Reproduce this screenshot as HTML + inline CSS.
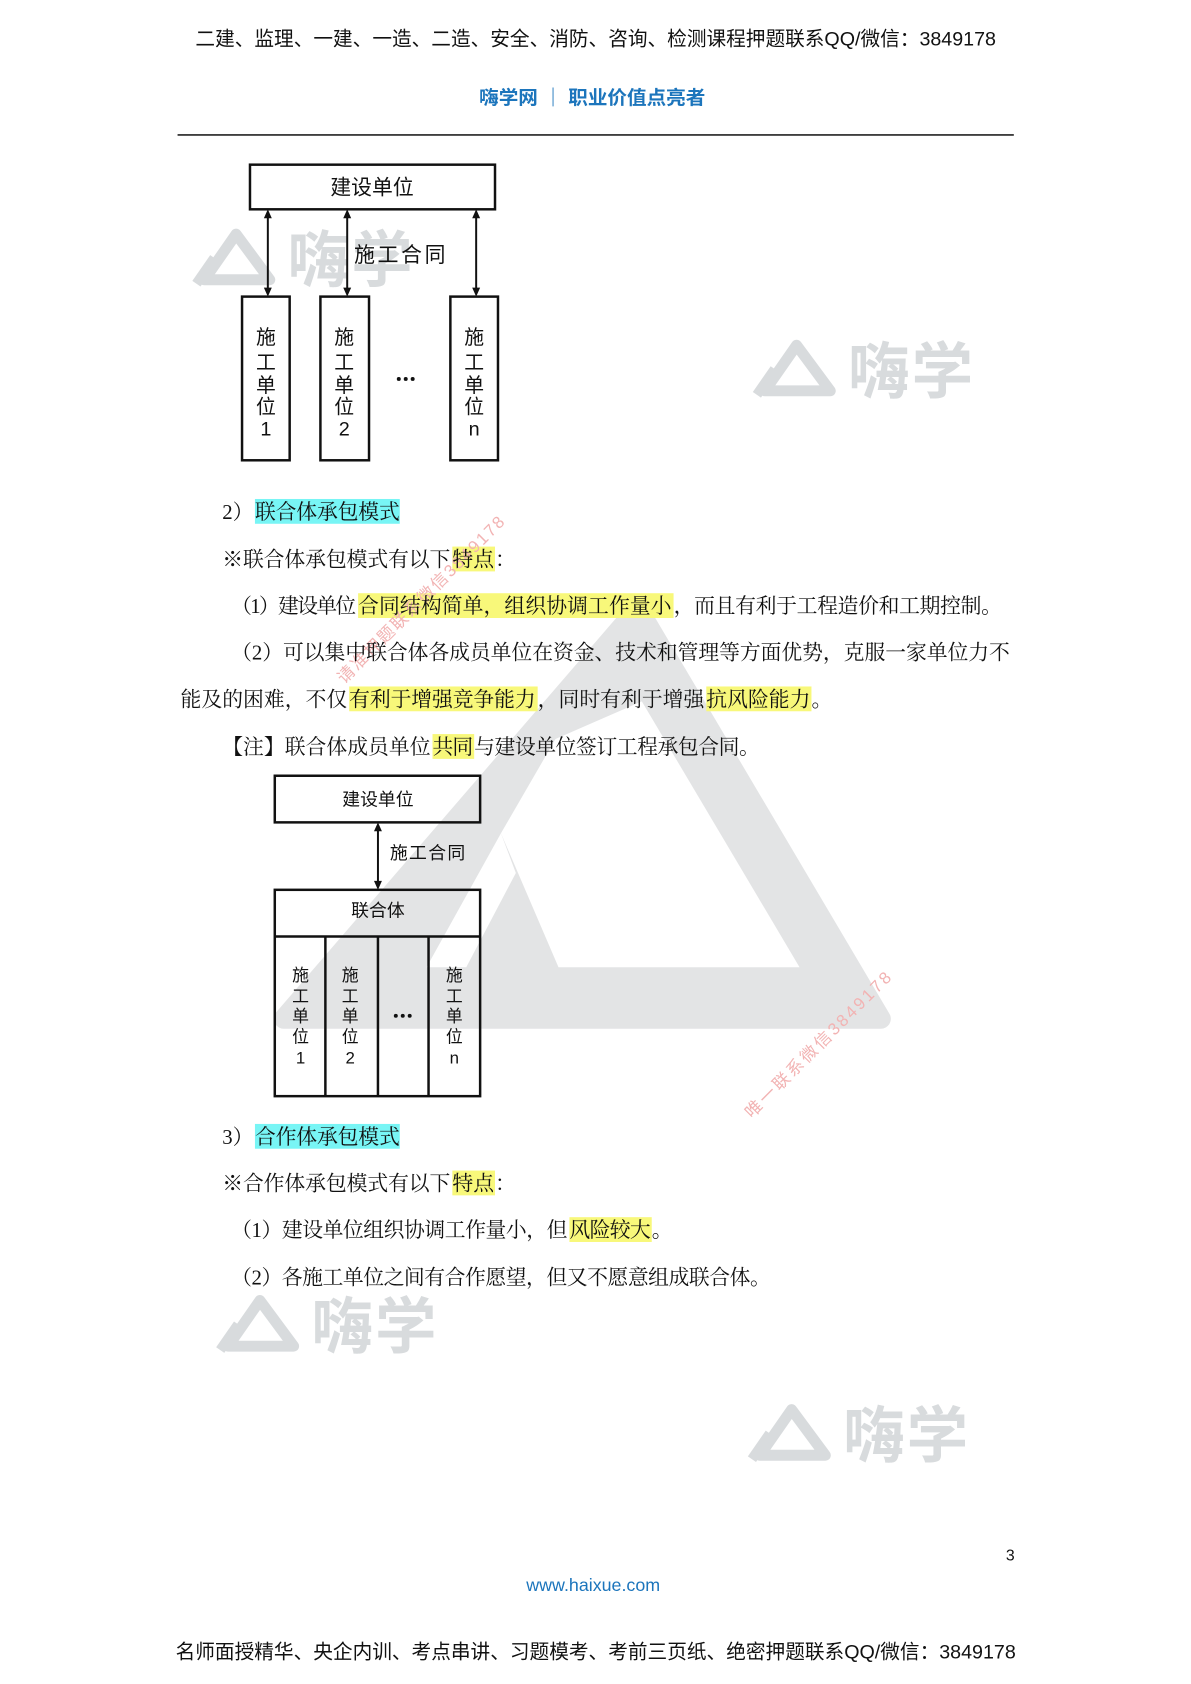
<!DOCTYPE html>
<html><head><meta charset="utf-8"><style>
html,body{margin:0;padding:0;background:#fff;}
svg{display:block;}
.s{font-family:"Liberation Sans","Noto Sans CJK SC",sans-serif;}
.t{font-family:"Liberation Serif","Noto Serif CJK SC",serif;font-size:21px;fill:#111;}
.d{font-family:"Liberation Sans","Noto Sans CJK SC",sans-serif;fill:#111;}
.wm{font-family:"Liberation Sans","Noto Sans CJK SC",sans-serif;font-weight:bold;fill:#d8dbdd;font-size:62px;}
.pk{font-family:"Liberation Sans","Noto Sans CJK SC",sans-serif;fill:#f2b3b3;font-size:17px;}
</style></head><body>
<svg width="1191" height="1684" viewBox="0 0 1191 1684" xmlns="http://www.w3.org/2000/svg">
<g transform="scale(0.992)">
<!-- big triangle watermark -->
<path d="M643 613 L888 1027 L286 1027 Z" fill="#e3e4e5" stroke="#e3e4e5" stroke-width="20" stroke-linejoin="round"/>
<path d="M647 707 L806 975 L563 975 L505 840 L560 745 Z" fill="#fff"/>
<path d="M505 840 L430 975 L470 975 L520 880 Z" fill="#fff"/>

<!-- small logo watermarks -->
<g transform="translate(198,230)"><path d="M8 52 L40 6 L74 52 Z" fill="none" stroke="#d8dbdd" stroke-width="11" stroke-linejoin="round"/><path d="M0 56 L18 30" stroke="#d8dbdd" stroke-width="10"/></g>
<text class="wm" x="290" y="284" textLength="126">嗨学</text>
<g transform="translate(763,342)"><path d="M8 52 L40 6 L74 52 Z" fill="none" stroke="#d8dbdd" stroke-width="11" stroke-linejoin="round"/><path d="M0 56 L18 30" stroke="#d8dbdd" stroke-width="10"/></g>
<text class="wm" x="855" y="396" textLength="126">嗨学</text>
<g transform="translate(222,1305)"><path d="M8 52 L40 6 L74 52 Z" fill="none" stroke="#d8dbdd" stroke-width="11" stroke-linejoin="round"/><path d="M0 56 L18 30" stroke="#d8dbdd" stroke-width="10"/></g>
<text class="wm" x="314" y="1359" textLength="126">嗨学</text>
<g transform="translate(758,1415)"><path d="M8 52 L40 6 L74 52 Z" fill="none" stroke="#d8dbdd" stroke-width="11" stroke-linejoin="round"/><path d="M0 56 L18 30" stroke="#d8dbdd" stroke-width="10"/></g>
<text class="wm" x="850" y="1469" textLength="126">嗨学</text>

<!-- header -->
<text class="s" x="197" y="46" font-size="20" fill="#111" textLength="807" lengthAdjust="spacingAndGlyphs">二建、监理、一建、一造、二造、安全、消防、咨询、检测课程押题联系QQ/微信：3849178</text>
<text class="s" x="483" y="105" font-size="19" font-weight="bold" fill="#1c75bc" textLength="228" lengthAdjust="spacingAndGlyphs">嗨学网 ｜ 职业价值点亮者</text>
<line x1="179" y1="136" x2="1022" y2="136" stroke="#222" stroke-width="1.6"/>

<!-- diagram 1 -->
<g stroke="#111" fill="none" stroke-width="2.5">
<rect x="252" y="166" width="247" height="45"/>
<rect x="244" y="299" width="48" height="165"/>
<rect x="323" y="299" width="49" height="165"/>
<rect x="454" y="299" width="48" height="165"/>
</g>
<g stroke="#111" stroke-width="2">
<line x1="270" y1="215" x2="270" y2="295"/><line x1="350" y1="215" x2="350" y2="295"/><line x1="480" y1="215" x2="480" y2="295"/>
</g>
<g fill="#111">
<path d="M270 211 l-4 9 h8z M270 299 l-4 -9 h8z"/>
<path d="M350 211 l-4 9 h8z M350 299 l-4 -9 h8z"/>
<path d="M480 211 l-4 9 h8z M480 299 l-4 -9 h8z"/>
</g>
<text class="d" x="375" y="196" font-size="21" text-anchor="middle">建设单位</text>
<text class="d" x="357" y="264" font-size="21" textLength="92">施工合同</text>
<g class="d" font-size="20" text-anchor="middle">
<text x="268" y="347">施</text><text x="268" y="372">工</text><text x="268" y="395">单</text><text x="268" y="417">位</text><text x="268" y="439">1</text>
<text x="347" y="347">施</text><text x="347" y="372">工</text><text x="347" y="395">单</text><text x="347" y="417">位</text><text x="347" y="439">2</text>
<text x="478" y="347">施</text><text x="478" y="372">工</text><text x="478" y="395">单</text><text x="478" y="417">位</text><text x="478" y="439">n</text>
</g>
<g fill="#111"><circle cx="402" cy="382" r="2"/><circle cx="409" cy="382" r="2"/><circle cx="416" cy="382" r="2"/></g>

<!-- highlights -->
<g>
<rect x="257" y="503" width="146" height="25" fill="#78f5f5"/>
<rect x="456" y="551" width="43" height="25" fill="#f8f87a"/>
<rect x="361" y="598" width="318" height="25" fill="#f8f87a"/>
<rect x="352" y="692" width="190" height="25" fill="#f8f87a"/>
<rect x="712" y="692" width="106" height="25" fill="#f8f87a"/>
<rect x="436" y="740" width="42" height="25" fill="#f8f87a"/>
<rect x="257" y="1133" width="146" height="25" fill="#78f5f5"/>
<rect x="456" y="1180" width="43" height="25" fill="#f8f87a"/>
<rect x="574" y="1227" width="83" height="25" fill="#f8f87a"/>
</g>

<!-- pink diagonal watermarks -->
<text class="pk" transform="translate(347,690) rotate(-45)" textLength="230">请准押题联系微信3849178</text>
<text class="pk" transform="translate(758,1128) rotate(-45)" textLength="200">唯一联系微信3849178</text>

<!-- body text -->
<text class="t" y="523"><tspan x="224">2）</tspan><tspan x="257" textLength="146">联合体承包模式</tspan></text>
<text class="t" y="571"><tspan x="224" textLength="230">※联合体承包模式有以下</tspan><tspan x="456" textLength="42">特点</tspan><tspan x="499">：</tspan></text>
<text class="t" y="618"><tspan x="233" textLength="126">（1）建设单位</tspan><tspan x="361" textLength="316">合同结构简单，组织协调工作量小</tspan><tspan x="679" textLength="331">，而且有利于工程造价和工期控制。</tspan></text>
<text class="t" x="233" y="665" textLength="785">（2）可以集中联合体各成员单位在资金、技术和管理等方面优势，克服一家单位力不</text>
<text class="t" y="712"><tspan x="182" textLength="168">能及的困难，不仅</tspan><tspan x="352" textLength="188">有利于增强竞争能力</tspan><tspan x="542" textLength="168">，同时有利于增强</tspan><tspan x="712" textLength="105">抗风险能力</tspan><tspan x="818">。</tspan></text>
<text class="t" y="760"><tspan x="224" textLength="210">【注】联合体成员单位</tspan><tspan x="436" textLength="41">共同</tspan><tspan x="478" textLength="288">与建设单位签订工程承包合同。</tspan></text>

<!-- diagram 2 -->
<g stroke="#111" fill="none" stroke-width="2.5">
<rect x="277" y="782" width="207" height="47"/>
<rect x="277" y="897" width="207" height="208"/>
<line x1="277" y1="944" x2="484" y2="944"/>
<line x1="328" y1="944" x2="328" y2="1105"/>
<line x1="381" y1="944" x2="381" y2="1105"/>
<line x1="432" y1="944" x2="432" y2="1105"/>
</g>
<line x1="381" y1="833" x2="381" y2="893" stroke="#111" stroke-width="2"/>
<path d="M381 829 l-4 9 h8z M381 897 l-4 -9 h8z" fill="#111"/>
<text class="d" x="381" y="812" font-size="18" text-anchor="middle">建设单位</text>
<text class="d" x="393" y="866" font-size="18" textLength="76">施工合同</text>
<text class="d" x="381" y="924" font-size="18" text-anchor="middle">联合体</text>
<g class="d" font-size="17" text-anchor="middle">
<text x="303" y="989">施</text><text x="303" y="1010">工</text><text x="303" y="1030">单</text><text x="303" y="1051">位</text><text x="303" y="1072">1</text>
<text x="353" y="989">施</text><text x="353" y="1010">工</text><text x="353" y="1030">单</text><text x="353" y="1051">位</text><text x="353" y="1072">2</text>
<text x="458" y="989">施</text><text x="458" y="1010">工</text><text x="458" y="1030">单</text><text x="458" y="1051">位</text><text x="458" y="1072">n</text>
</g>
<g fill="#111"><circle cx="399" cy="1024" r="2"/><circle cx="406" cy="1024" r="2"/><circle cx="413" cy="1024" r="2"/></g>

<text class="t" y="1153"><tspan x="224">3）</tspan><tspan x="257" textLength="146">合作体承包模式</tspan></text>
<text class="t" y="1200"><tspan x="224" textLength="230">※合作体承包模式有以下</tspan><tspan x="456" textLength="42">特点</tspan><tspan x="499">：</tspan></text>
<text class="t" y="1247"><tspan x="233" textLength="339">（1）建设单位组织协调工作量小，但</tspan><tspan x="574" textLength="82">风险较大</tspan><tspan x="657">。</tspan></text>
<text class="t" x="233" y="1295" textLength="544">（2）各施工单位之间有合作愿望，但又不愿意组成联合体。</text>

<!-- footer -->
<text class="s" x="1014" y="1573" font-size="16" fill="#111">3</text>
<text class="s" x="598" y="1604" font-size="18" fill="#1c75bc" text-anchor="middle">www.haixue.com</text>
<text class="s" x="177" y="1672" font-size="20" fill="#111" textLength="847" lengthAdjust="spacingAndGlyphs">名师面授精华、央企内训、考点串讲、习题模考、考前三页纸、绝密押题联系QQ/微信：3849178</text>
</g>
</svg>
</body></html>
